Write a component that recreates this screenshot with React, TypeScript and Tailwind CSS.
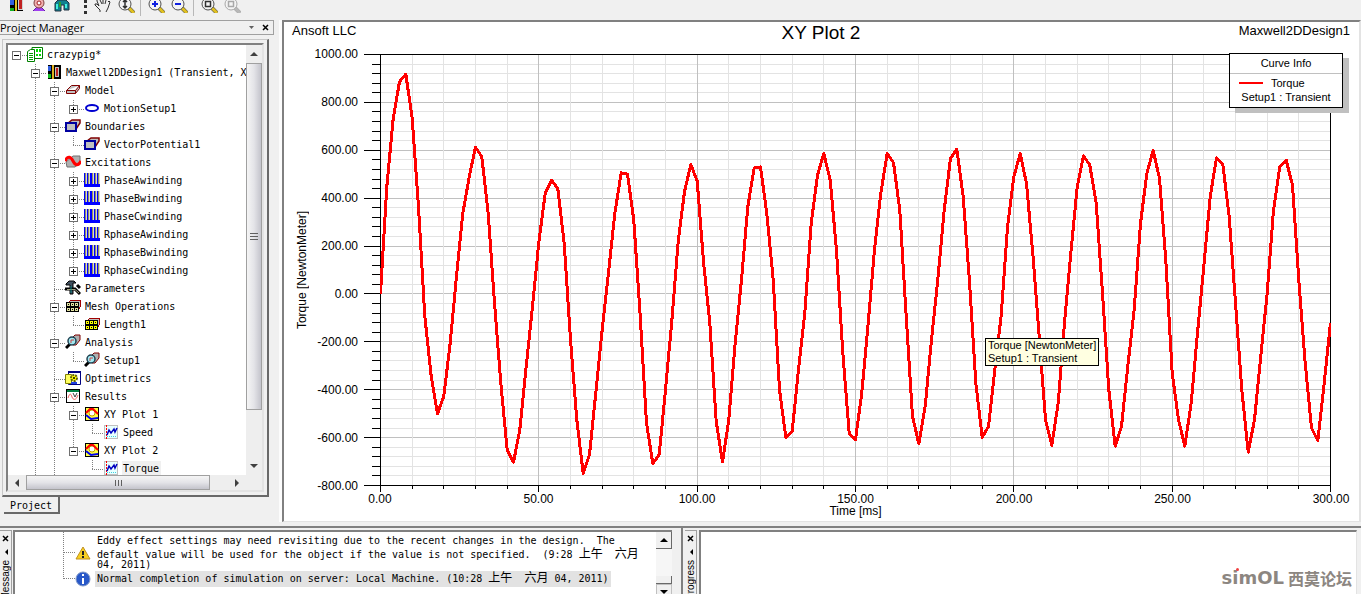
import type React from "react";

// torque samples in NewtonMeter, one every 2 ms
const SAMPLES = [
  0, 447, 733, 886, 918, 733, 364, -93, -344, -500, -427, -205, 74, 336, 489, 613, 573, 336, -38, -372,
  -653, -703, -567, -302, -52, 215, 420, 475, 440, 211, -191, -525, -750, -671, -413, -149, 88, 336, 506, 500,
  308, -93, -539, -708, -671, -400, -114, 218, 427, 541, 471, 135, -121, -532, -702, -525, -205, 60, 364, 527,
  530, 336, 60, -400, -599, -573, -316, -79, 294, 496, 587, 475, 183, -246, -583, -608, -413, -121, 185, 420,
  587, 548, 350, -93, -511, -626, -469, -191, 60, 350, 566, 605, 406, 50, -372, -599, -553, -316, -90, 280,
  489, 587, 461, 169, -177, -525, -632, -455, -121, 169, 447, 577, 538, 378, 4, -400, -636, -553, -302, -65,
  294, 503, 600, 482, 141, -330, -525, -636, -455, -163, 115, 406, 568, 542, 322, -38, -400, -661, -525, -260,
  4, 350, 531, 559, 454, 60, -288, -560, -612, -372, -121,
];

const PLOT_W = 951;
const PLOT_H = 432;
const toX = (ms: number) => 0.5 + (ms * (PLOT_W - 1)) / 300;
const toY = (value: number) => 0.5 + ((1000 - value) * (PLOT_H - 1)) / 1800;

const xTicks = Array.from({ length: 31 }, (_, i) => i * 10);
const yTicks = Array.from({ length: 46 }, (_, i) => 1000 - i * 40);
const xLabels = [0, 50, 100, 150, 200, 250, 300];
const yLabels = [1000, 800, 600, 400, 200, 0, -200, -400, -600, -800];

const points = SAMPLES.map((v, i) => `${toX(i * 2).toFixed(1)},${toY(v).toFixed(1)}`).join(" ");

type IconName =
  | "project"
  | "design"
  | "box"
  | "motion"
  | "boundary"
  | "excitation"
  | "winding"
  | "tools"
  | "mesh"
  | "meshOp"
  | "analysis"
  | "optimetrics"
  | "results"
  | "plot"
  | "trace";

type TreeItem = {
  level: number;
  label: string;
  icon: IconName;
  state?: "open" | "closed";
  selected?: boolean;
};

const treeItems: TreeItem[] = [
  { level: 0, label: "crazypig*", icon: "project", state: "open" },
  { level: 1, label: "Maxwell2DDesign1 (Transient, X", icon: "design", state: "open" },
  { level: 2, label: "Model", icon: "box", state: "open" },
  { level: 3, label: "MotionSetup1", icon: "motion", state: "closed" },
  { level: 2, label: "Boundaries", icon: "boundary", state: "open" },
  { level: 3, label: "VectorPotential1", icon: "boundary" },
  { level: 2, label: "Excitations", icon: "excitation", state: "open" },
  { level: 3, label: "PhaseAwinding", icon: "winding", state: "closed" },
  { level: 3, label: "PhaseBwinding", icon: "winding", state: "closed" },
  { level: 3, label: "PhaseCwinding", icon: "winding", state: "closed" },
  { level: 3, label: "RphaseAwinding", icon: "winding", state: "closed" },
  { level: 3, label: "RphaseBwinding", icon: "winding", state: "closed" },
  { level: 3, label: "RphaseCwinding", icon: "winding", state: "closed" },
  { level: 2, label: "Parameters", icon: "tools" },
  { level: 2, label: "Mesh Operations", icon: "mesh", state: "open" },
  { level: 3, label: "Length1", icon: "meshOp" },
  { level: 2, label: "Analysis", icon: "analysis", state: "open" },
  { level: 3, label: "Setup1", icon: "analysis" },
  { level: 2, label: "Optimetrics", icon: "optimetrics" },
  { level: 2, label: "Results", icon: "results", state: "open" },
  { level: 3, label: "XY Plot 1", icon: "plot", state: "open" },
  { level: 4, label: "Speed", icon: "trace" },
  { level: 3, label: "XY Plot 2", icon: "plot", state: "open" },
  { level: 4, label: "Torque", icon: "trace", selected: true },
];

// true when the branch line of a level goes on below the given row
const branchContinues = (row: number, level: number) => {
  if (level === 0) return false;
  if (level <= 2) return true;
  for (const item of treeItems.slice(row + 1)) {
    if (item.level < level) return false;
    if (item.level === level) return true;
  }
  return false;
};

const MeshGrid = ({ fill }: { fill: string }) => (
  <g shapeRendering="crispEdges">
    <path d="M3 5 6 2H15V9L13 12" fill="#c0c0c0" stroke="#a00000" />
    <rect x="1" y="4" width="13" height="10" fill="#000" />
    {[2, 6, 10].map((x) =>
      [5, 10].map((y) => (
        <g key={`${x}-${y}`}>
          <rect x={x} y={y} width="3" height="3" fill={fill} />
          <rect x={x + 1} y={y + 1} width="1" height="1" fill="#000" />
        </g>
      )),
    )}
  </g>
);

const iconArt: Record<IconName, React.ReactNode> = {
  project: (
    <>
      <path d="M5 1.5H15.5V12.5H5z" fill="#fff" stroke="#008000" />
      <path d="M10 3v3M13 3v3M10 8v2M13 8v2" stroke="#00e000" strokeWidth="2" />
      <path d="M0.5 5.5 3.5 3.5H7.5V15.5H0.5z" fill="#fff" stroke="#008000" />
      <path d="M2 7.5H6M2 9.5H6M2 11.5H6M2 13.5H6" stroke="#00a000" />
    </>
  ),
  design: (
    <g shapeRendering="crispEdges">
      <rect x="2" y="1" width="13" height="14" fill="#000" />
      <rect x="2" y="2" width="3" height="5" fill="#3060e0" />
      <rect x="2" y="10" width="3" height="4" fill="#10c020" />
      <rect x="6" y="1" width="2" height="14" fill="#e0b020" />
      <rect x="9" y="3" width="4" height="10" fill="#c0c0c0" />
      <rect x="10" y="4" width="2" height="8" fill="#c02020" />
    </g>
  ),
  box: (
    <path
      d="M1.5 8.5 6.5 3.5H14.5V6.5L10.5 11.5H1.5zM1.5 8.5H10.5L14.5 3.5M10.5 8.5V11.5"
      fill="#c0c0c0"
      stroke="#800000"
    />
  ),
  motion: <ellipse cx="8" cy="8" rx="6" ry="3" fill="none" stroke="#0000d0" strokeWidth="2" />,
  boundary: (
    <>
      <path d="M3 5 7 2H15V5L11 11" fill="#c0c0c0" stroke="#800000" strokeWidth="1.5" />
      <path d="M1 5H11V13H1z" fill="#c0c0c0" stroke="#0000a0" strokeWidth="2" />
    </>
  ),
  excitation: (
    <>
      <path d="M1 8 8 2H15V9L10 13H2z" fill="#b0b0b0" stroke="#707070" />
      <path d="M0 7C3 1 6 3 8 7S13 13 16 7" fill="none" stroke="#f00" strokeWidth="3" />
    </>
  ),
  winding: (
    <g shapeRendering="crispEdges">
      <rect x="0" y="1" width="16" height="14" fill="#0000ff" />
      {[1, 4, 8, 11, 14].map((x) => (
        <g key={x}>
          <rect x={x} y="1" width="2" height="11" fill="#d8d8d8" />
          <rect x={x} y="1" width="1" height="11" fill="#909060" />
        </g>
      ))}
    </g>
  ),
  tools: (
    <>
      <path d="M1 4 4 1H9L11 3H8V14H5V5H1z" fill="#405060" stroke="#000" />
      <path d="M0 9H10L15 14M12 5 15 8" fill="none" stroke="#000" strokeWidth="3" />
      <path d="M2 9.5H10L14 13" fill="none" stroke="#a0a080" />
      <path d="M6 6V13" stroke="#0a8080" />
    </>
  ),
  mesh: <MeshGrid fill="#e0e0a0" />,
  meshOp: <MeshGrid fill="#ffff00" />,
  analysis: (
    <>
      <path d="M6 5 10 1H15V6L11 11H8z" fill="#b0b0b0" stroke="#800000" />
      <path d="M1 14 5 10" stroke="#000" strokeWidth="3" />
      <circle cx="7" cy="7" r="4" fill="#a0e8f0" stroke="#204050" strokeWidth="1.5" />
      <path d="M6 9V6H9" fill="none" stroke="#d04040" />
    </>
  ),
  optimetrics: (
    <>
      <path d="M3.5 1.5H15.5V14.5H3.5z" fill="#fff" stroke="#000080" />
      <path d="M3 2H16" stroke="#000080" strokeWidth="2" />
      <path d="M0.5 4.5H6.5V13.5H0.5z" fill="#ffff60" stroke="#808000" />
      <circle cx="9" cy="8" r="3" fill="#ffff00" stroke="#606000" strokeWidth="2" strokeDasharray="2 1" />
      <circle cx="9" cy="8" r="1" fill="#000" />
      <path d="M6 13H12" stroke="#2040e0" strokeWidth="2" />
    </>
  ),
  results: (
    <>
      <rect x="1.5" y="1.5" width="13" height="13" fill="#fff" stroke="#000" />
      <path d="M2 3H14" stroke="#008040" strokeWidth="2" />
      <path d="M3 10C5 4 6 6 7 9S11 13 13 7" fill="none" stroke="#f06060" />
      <path d="M8 5 10 9 12 5" fill="none" stroke="#404040" />
    </>
  ),
  plot: (
    <>
      <rect x="1.5" y="1.5" width="13" height="13" fill="#ffff40" stroke="#000" />
      <circle cx="8" cy="7" r="3" fill="#fff" stroke="#c0a000" />
      <path d="M2 7 6 3H9L14 8" fill="none" stroke="#f00" strokeWidth="2" />
      <path d="M2 9 7 13 14 12" fill="none" stroke="#0000f0" strokeWidth="2" />
    </>
  ),
  trace: (
    <>
      <rect x="1.5" y="1.5" width="13" height="13" fill="#e8ffff" stroke="#c0c0c0" />
      <path d="M3.5 1V15" stroke="#f00" strokeDasharray="2 1" />
      <path d="M4 12.5H14" stroke="#40d0e0" strokeDasharray="1 1" />
      <path d="M4 11 6 6 8 9 11 5 12 8 14 4" fill="none" stroke="#0000c0" strokeWidth="1.5" />
    </>
  ),
};

const Guide = ({ up, down, across }: { up: boolean; down: boolean; across?: boolean }) => (
  <svg width="19" height="18" className="block shrink-0" shapeRendering="crispEdges" aria-hidden="true">
    {up && <path d="M8.5 0V9" stroke="#808080" strokeDasharray="1 1" />}
    {down && <path d="M8.5 10V18" stroke="#808080" strokeDasharray="1 1" />}
    {across && <path d="M8 9.5H19" stroke="#808080" strokeDasharray="1 1" />}
  </svg>
);

const TreeRow: React.FC<{ item: TreeItem; row: number }> = ({ item, row }) => {
  const { level, label, icon, state, selected } = item;
  return (
    <li className="flex h-[18px] items-center whitespace-pre">
      {Array.from({ length: level }, (_, k) => {
        const on = branchContinues(row, k);
        return <Guide key={k} up={on} down={on} />;
      })}
      <span className="relative h-[18px] w-[19px] shrink-0">
        <Guide up={level > 0} down={branchContinues(row, level)} across />
        {state && (
          <button
            type="button"
            aria-label={`${state === "open" ? "Collapse" : "Expand"} ${label}`}
            className="absolute top-[5px] left-1 block size-[9px] bg-white"
          >
            <svg width="9" height="9" className="block" shapeRendering="crispEdges">
              <rect x="0.5" y="0.5" width="8" height="8" fill="#fff" stroke="#707070" />
              <path d={state === "open" ? "M2 4.5H7" : "M2 4.5H7M4.5 2V7"} stroke="#000" />
            </svg>
          </button>
        )}
      </span>
      <svg width="16" height="16" className="mr-[3px] mb-0.5 shrink-0" aria-hidden="true">
        {iconArt[icon]}
      </svg>
      <span className={selected ? "bg-[#f0f0f0] pr-0.5 pl-px leading-4" : "pr-0.5 pl-px leading-4"}>{label}</span>
    </li>
  );
};

type MagnifierProps = { color?: string; handle?: string; children?: React.ReactNode };

const Magnifier = ({ color = "#505050", handle = "#e0c020", children }: MagnifierProps) => (
  <svg width="18" height="13" className="block" aria-hidden="true">
    <path d="M11 7 17 13" stroke={color} strokeWidth="4" />
    <path d="M12 8 17 13" stroke={handle} strokeWidth="3" />
    <circle cx="8" cy="4" r="6" fill="#f4f4f4" stroke={color} />
    {children}
  </svg>
);

const ToolButton = ({ label, children }: { label: string; children: React.ReactNode }) => (
  <button type="button" aria-label={label} className="flex h-[13px] w-[23px] justify-center">
    {children}
  </button>
);

const Grip = () => <span className="h-[14px] w-0 border-l-3 border-dotted border-[#303030]" />;
const Separator = () => <span className="mx-[3px] h-4 w-px bg-[#b8b8b8]" />;

const Toolbar = () => (
  <div role="toolbar" aria-label="View" className="flex h-5 shrink-0 items-start overflow-hidden">
    <div className="flex w-[84px] pl-1">
      <ToolButton label="Design">
        <svg width="14" height="12" className="block" shapeRendering="crispEdges">
          <rect width="13" height="11" x="1" fill="#000" />
          <rect x="1" width="4" height="5" fill="#3060e0" />
          <rect x="1" y="8" width="4" height="3" fill="#10b020" />
          <rect x="6" width="2" height="11" fill="#e0c020" />
          <rect x="9" width="5" height="10" fill="#d0d0d0" />
          <rect x="10" width="3" height="9" fill="#c02020" />
        </svg>
      </ToolButton>
      <ToolButton label="Optimize">
        <svg width="16" height="12" className="block">
          <path d="M2 11 6 7H10L14 11" fill="#a040f0" stroke="#6020a0" />
          <circle cx="8" cy="3" r="5" fill="#f0b0b0" stroke="#804040" />
          <circle cx="8" cy="3" r="2" fill="#fff" stroke="#a02020" />
        </svg>
      </ToolButton>
      <ToolButton label="Find">
        <svg width="16" height="12" className="block">
          <path d="M1 3 4 0H12L15 3V10H10V5H7V11H1z" fill="#108090" stroke="#203040" />
          <path d="M3 4V9M12 4V8" stroke="#40f0e0" strokeWidth="2" />
          <path d="M6 2V7" stroke="#30a030" strokeWidth="2" />
        </svg>
      </ToolButton>
    </div>
    <Grip />
    <div className="flex pl-1">
      <ToolButton label="Pan">
        <svg width="18" height="13" className="block">
          <path
            d="M6 12V10L1 5V4H3L5 6 3 1V0M6 0 8 4M9 0V4M12 0 11 4M14 2 15 1 16 2 14 8 12 12"
            fill="none"
            stroke="#303030"
          />
        </svg>
      </ToolButton>
      <ToolButton label="Zoom">
        <Magnifier>
          <path d="M8 0V8M6 2 8 0 10 2M6 6 8 8 10 6" fill="none" stroke="#303030" strokeWidth="1.5" />
        </Magnifier>
      </ToolButton>
    </div>
    <Separator />
    <div className="flex">
      <ToolButton label="Zoom in">
        <Magnifier>
          <path d="M5 4H11M8 1V7" stroke="#1020e0" strokeWidth="2" />
        </Magnifier>
      </ToolButton>
      <ToolButton label="Zoom out">
        <Magnifier>
          <path d="M5 4H11" stroke="#1020e0" strokeWidth="2" />
        </Magnifier>
      </ToolButton>
    </div>
    <Separator />
    <div className="flex">
      <ToolButton label="Fit all">
        <Magnifier>
          <rect x="5.5" y="1.5" width="5" height="5" fill="none" stroke="#303030" strokeWidth="1.5" />
        </Magnifier>
      </ToolButton>
      <ToolButton label="Fit selection">
        <Magnifier color="#a8a8a8" handle="#b8b8b8">
          <rect x="5.5" y="1.5" width="5" height="5" fill="none" stroke="#a8a8a8" strokeWidth="1.5" />
        </Magnifier>
      </ToolButton>
    </div>
  </div>
);

const Arrow = ({ d, fill = "#404040" }: { d: string; fill?: string }) => (
  <svg width="8" height="8" className="block" aria-hidden="true">
    <path d={d} fill={fill} />
  </svg>
);
const UP = "M0 6 4 2 8 6z";
const DOWN = "M0 2H8L4 6z";
const LEFT = "M6 0V8L2 4z";
const RIGHT = "M2 0V8L6 4z";

const ScrollButton = ({ d, label, className }: { d: string; label: string; className: string }) => (
  <button type="button" aria-label={label} className={`flex shrink-0 items-center justify-center ${className}`}>
    <Arrow d={d} />
  </button>
);

const CloseMark = () => (
  <svg width="7" height="7" className="block" aria-hidden="true">
    <path d="M1 1 6 6M6 1 1 6" stroke="#000" strokeWidth="1.5" />
  </svg>
);

const ProjectManager = () => (
  <aside className="flex w-[282px] shrink-0 flex-col border-r-3 border-white/80 bg-[#f0f0f0] pr-px">
    <header className="mr-1 flex h-[15px] shrink-0 items-center border border-l-0 border-[#a0a0a0] pr-1">
      <h2 className="flex-1 font-['Open_Sans',sans-serif] text-[11px] leading-3">Project Manager</h2>
      <button type="button" aria-label="Window position" className="mr-2">
        <svg width="5" height="3" className="block">
          <path d="M0 0H5L2.5 3z" fill="#606060" />
        </svg>
      </button>
      <button type="button" aria-label="Close Project Manager">
        <CloseMark />
      </button>
    </header>

    <div className="mt-1 mr-[9px] ml-0.5 flex min-h-0 flex-1 flex-col border-t border-r-2 border-b-2 border-l border-t-[#c8c8c8] border-r-[#696969] border-b-[#696969] border-l-[#c8c8c8] p-[3px]">
      <div className="flex min-h-0 flex-1 flex-col border-2 border-t-[#808080] border-r-[#e3e3e3] border-b-[#e3e3e3] border-l-[#808080] bg-white">
        <div className="flex min-h-0 flex-1">
          <ul className="min-w-0 flex-1 overflow-hidden pt-px font-['DejaVu_Sans_Mono',monospace] text-[10px]">
            {treeItems.map((item, row) => (
              <TreeRow key={item.label} item={item} row={row} />
            ))}
          </ul>
          <div className="flex w-4 shrink-0 flex-col bg-[#eeeeee]">
            <ScrollButton d={UP} label="Scroll up" className="h-[18px]" />
            <div className="min-h-0 flex-1">
              <div className="flex h-[88%] items-center justify-center border border-[#a0a0a0] bg-linear-to-r from-[#f5f5f5] via-[#e4e4e8] to-[#c4c4cc]">
                <svg width="8" height="8" shapeRendering="crispEdges">
                  <path d="M0 1.5H8M0 4.5H8M0 7.5H8" stroke="#606060" />
                </svg>
              </div>
            </div>
            <ScrollButton d={DOWN} label="Scroll down" className="h-[18px]" />
          </div>
        </div>
        <div className="flex h-[15px] shrink-0 bg-[#eeeeee] pr-4">
          <ScrollButton d={LEFT} label="Scroll left" className="w-[18px]" />
          <div className="min-w-0 flex-1">
            <div className="flex h-full w-[91%] items-center justify-center border border-[#a0a0a0] bg-linear-to-b from-[#f5f5f5] via-[#e4e4e8] to-[#c4c4cc]">
              <svg width="8" height="8" shapeRendering="crispEdges">
                <path d="M1.5 1V7M4.5 1V7M7.5 1V7" stroke="#606060" />
              </svg>
            </div>
          </div>
          <ScrollButton d={RIGHT} label="Scroll right" className="w-[18px]" />
        </div>
      </div>
    </div>

    <div className="mb-2 ml-1 flex">
      <button
        type="button"
        className="h-[17px] w-14 border-r-2 border-b-2 border-[#696969] pt-0.5 font-['DejaVu_Sans_Mono',monospace] text-[10px] leading-3"
      >
        Project
      </button>
    </div>
  </aside>
);

const PlotArea = () => (
  <div className="relative min-w-0 flex-1">
    <svg
      viewBox={`0 0 ${PLOT_W} ${PLOT_H}`}
      preserveAspectRatio="none"
      className="absolute inset-0 block h-full w-full"
      shapeRendering="crispEdges"
      role="img"
      aria-label="Torque over time"
    >
      {yTicks.map((v) => (
        <path key={v} d={`M0 ${toY(v)}H${PLOT_W}`} stroke={v % 200 === 0 ? "#c0c0c0" : "#e3e3e3"} />
      ))}
      {xTicks.map((t) => (
        <path key={t} d={`M${toX(t)} 0V${PLOT_H}`} stroke={t % 50 === 0 ? "#c0c0c0" : "#e3e3e3"} />
      ))}
      <rect x="0.5" y="0.5" width={PLOT_W - 1} height={PLOT_H - 1} fill="none" stroke="#000" />
      <polyline points={points} fill="none" stroke="#f00" strokeWidth="3" strokeLinejoin="round" />
    </svg>

    <div className="absolute -top-px right-[-12px] w-[114px] border border-black bg-white text-[11px] shadow-[6px_5px_0_#c0c0c0]">
      <div className="border-b border-[#c0c0c0] text-center leading-[19px]">Curve Info</div>
      <div className="flex items-center pt-0.5 pl-[9px] leading-[14px]">
        <span className="mr-2 h-0.5 w-6 bg-[#ff0000]" />
        Torque
      </div>
      <div className="pb-0.5 text-center leading-[15px]">Setup1 : Transient</div>
    </div>

    <div
      role="tooltip"
      className="absolute top-[284px] left-[605px] border border-black bg-[#ffffe1] px-0.5 text-[11px] leading-[13px] whitespace-nowrap"
    >
      Torque [NewtonMeter]
      <br />
      Setup1 : Transient
    </div>
  </div>
);

const PlotWindow = () => (
  <main className="flex min-w-0 flex-1 flex-col border-t-2 border-r-2 border-b border-l-2 border-t-[#808080] border-r-[#e3e3e3] border-b-[#e3e3e3] border-l-[#808080] bg-white font-['Liberation_Sans',sans-serif]">
    <header className="grid h-8 shrink-0 grid-cols-[1fr_auto_1fr] items-start pr-[9px] pl-2">
      <span className="text-[13px] leading-[18px]">Ansoft LLC</span>
      <h1 className="text-[19px] leading-[22px]">XY Plot 2</h1>
      <span className="text-right text-[13px] leading-[18px]">Maxwell2DDesign1</span>
    </header>

    <div className="flex min-h-0 flex-1 pr-7">
      <div className="flex w-20 shrink-0 justify-between pr-[6px] pl-3">
        <div className="flex items-center">
          <span className="rotate-180 text-[12px] leading-3 whitespace-nowrap [writing-mode:vertical-rl]">
            Torque [NewtonMeter]
          </span>
        </div>
        <div className="flex flex-col justify-between text-[12px]">
          {yLabels.map((v) => (
            <span key={v} className="flex h-0 items-center justify-end">
              {v.toFixed(2)}
            </span>
          ))}
        </div>
      </div>
      <svg
        viewBox={`0 0 16 ${PLOT_H}`}
        preserveAspectRatio="none"
        className="h-full w-4 shrink-0"
        shapeRendering="crispEdges"
        aria-hidden="true"
      >
        {yTicks.map((v) => (
          <path key={v} d={`M${v % 200 === 0 ? 0 : 8} ${toY(v)}H16`} stroke="#000" />
        ))}
      </svg>
      <PlotArea />
    </div>

    <div className="h-[35px] shrink-0 pr-7 pl-24">
      <svg
        viewBox={`0 0 ${PLOT_W} 7`}
        preserveAspectRatio="none"
        className="block h-[7px] w-full"
        shapeRendering="crispEdges"
        aria-hidden="true"
      >
        {xTicks.map((t) => (
          <path key={t} d={`M${toX(t)} 0V${t % 50 === 0 ? 6 : 3}`} stroke="#000" />
        ))}
      </svg>
      <div className="flex h-3 justify-between text-[12px] leading-3">
        {xLabels.map((t) => (
          <span key={t} className="flex w-0 justify-center">
            {t.toFixed(2)}
          </span>
        ))}
      </div>
      <div className="text-center text-[12px] leading-3">Time [ms]</div>
    </div>
  </main>
);

const DockStrip = ({ title }: { title: string }) => (
  <div className="flex w-3 shrink-0 flex-col items-center border-t border-r border-[#a0a0a0] pt-1">
    <button type="button" aria-label={`Close ${title}`}>
      <CloseMark />
    </button>
    <button type="button" aria-label={`Dock ${title}`} className="mt-[6px]">
      <Arrow d="M6 1V7L3 4z" fill="#000" />
    </button>
    <span className="mt-1 rotate-180 font-['Liberation_Sans',sans-serif] text-[10px] leading-3 [writing-mode:vertical-rl]">
      {title}
    </span>
  </div>
);

const Zh = ({ children }: { children: string }) => (
  <span lang="zh" className="font-['Noto_Sans_CJK_SC',sans-serif] text-[12px] leading-none">
    {children}
  </span>
);

const MessagePanel = () => (
  <section aria-label="Message" className="flex w-[681px] shrink-0 pt-0.5 pr-[9px]">
    <DockStrip title="Message" />
    <div className="ml-px flex min-w-0 flex-1 border-t-2 border-l-2 border-[#808080] bg-white">
      <div className="relative min-w-0 flex-1 overflow-hidden pt-[3px] font-['DejaVu_Sans_Mono',monospace] text-[10px] leading-3">
        <svg width="12" height="48" className="absolute top-0 left-12" shapeRendering="crispEdges" aria-hidden="true">
          <path d="M0.5 0V47M1 20.5H12M1 46.5H12" fill="none" stroke="#808080" strokeDasharray="1 1" />
        </svg>
        <div className="flex h-9 items-center pl-[60px]">
          <svg width="16" height="16" className="mr-[6px] shrink-0" aria-label="Warning">
            <path d="M8 2 15 14H1z" fill="#f8d020" stroke="#c09020" strokeLinejoin="round" />
            <path d="M8 6V10M8 11V13" stroke="#202020" strokeWidth="2" />
          </svg>
          <div>
            <p className="h-3 whitespace-pre">
              Eddy effect settings may need revisiting due to the recent changes in the design.{"  "}The
            </p>
            <p className="h-3 whitespace-pre">
              default value will be used for the object if the value is not specified.{"  "}(9:28 <Zh>上午</Zh>
              {"  "}
              <Zh>六月</Zh>
            </p>
            <p className="h-3">04, 2011)</p>
          </div>
        </div>
        <div className="flex h-4 items-center pl-[60px]">
          <svg width="16" height="16" className="mr-1 shrink-0" aria-label="Information">
            <circle cx="8" cy="8" r="7" fill="#2858c8" stroke="#8098c8" />
            <path d="M8 3V5M8 7V13" stroke="#fff" strokeWidth="2" />
          </svg>
          <p className="h-4 bg-[#e2e2e2] px-0.5 leading-4 whitespace-pre">
            Normal completion of simulation on server: Local Machine. (10:28 <Zh>上午</Zh>
            {"  "}
            <Zh>六月</Zh> 04, 2011)
          </p>
        </div>
      </div>
      <div className="flex w-4 shrink-0 flex-col overflow-hidden bg-[#f6f6f6]">
        <button
          type="button"
          aria-label="Scroll messages up"
          className="flex h-[17px] shrink-0 items-center justify-center border-r border-b border-[#696969] bg-[#f0f0f0]"
        >
          <Arrow d={UP} fill="#000" />
        </button>
        <div className="mt-[27px] h-2 shrink-0 border-r border-b border-[#696969] bg-[#f0f0f0]" />
        <button
          type="button"
          aria-label="Scroll messages down"
          className="flex h-4 shrink-0 items-center justify-center border border-[#c0c0c0] bg-[#f0f0f0]"
        >
          <Arrow d={DOWN} fill="#000" />
        </button>
      </div>
    </div>
  </section>
);

const Watermark = () => (
  <div className="flex items-end text-[#8c8681]">
    <span className="relative font-['DejaVu_Sans',sans-serif] text-[18px] leading-4 font-bold">
      simOL
      <span className="absolute top-[-2px] left-[14px] size-[3px] rounded-full bg-[#f04040]" />
    </span>
    <span lang="zh" className="ml-1 font-['Noto_Sans_CJK_SC',sans-serif] text-[16px] leading-4 font-bold">
      西莫论坛
    </span>
  </div>
);

const ProgressPanel = () => (
  <section aria-label="Progress" className="flex min-w-0 flex-1 border-l-2 border-[#808080] pt-0.5 pr-1 pl-0.5">
    <DockStrip title="Progress" />
    <div className="ml-0.5 flex min-w-0 flex-1 items-end justify-end border-t-2 border-r border-l-2 border-t-[#808080] border-r-[#e3e3e3] border-l-[#808080] bg-white pr-1 pb-2">
      <Watermark />
    </div>
  </section>
);

export default function App() {
  return (
    <div className="flex h-screen flex-col overflow-hidden bg-[#f0f0f0] text-black">
      <Toolbar />
      <div className="flex min-h-0 flex-1">
        <ProjectManager />
        <PlotWindow />
      </div>
      <div className="mt-1 flex h-[68px] shrink-0 border-t-2 border-[#808080]">
        <MessagePanel />
        <ProgressPanel />
      </div>
    </div>
  );
}
